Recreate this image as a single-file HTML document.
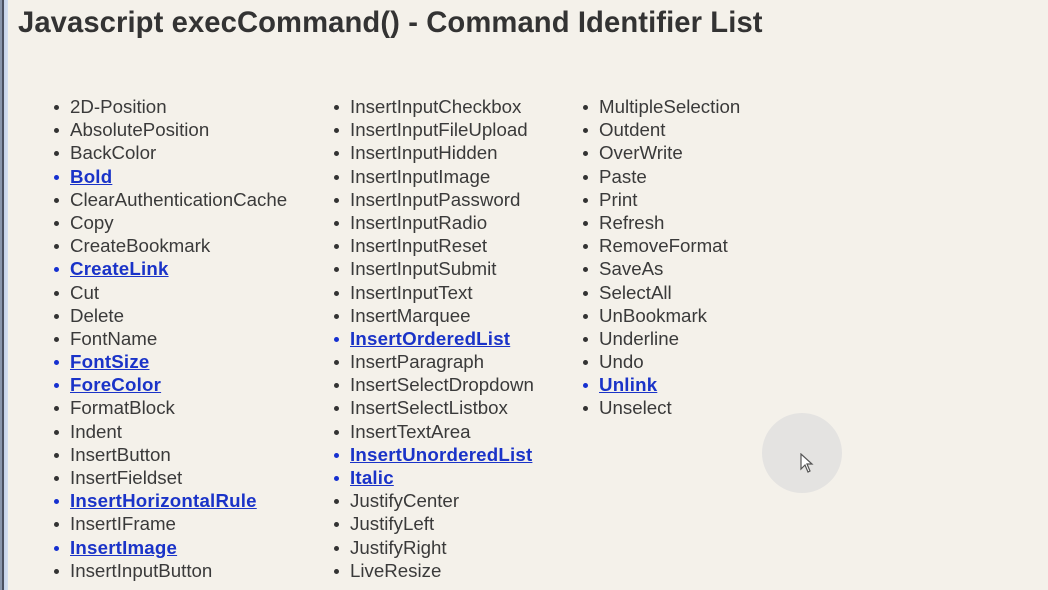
<!DOCTYPE html>
<html><head><style>
body{margin:0;width:1048px;height:590px;overflow:hidden;background:#f4f1ea;font-family:"Liberation Sans",sans-serif;position:relative}
.bar{position:absolute;left:0;top:0;width:8px;height:590px;background:linear-gradient(90deg,#8a96ac 0,#8a96ac 2px,#4a5060 2px,#4a5060 4px,#c6d3ea 4px,#d6e0f0 8px)}
h1{position:absolute;left:18px;top:7px;margin:0;font-size:29.2px;font-weight:bold;color:#333;letter-spacing:0.1px}
ul{position:absolute;top:95px;margin:0;padding:0;list-style:none}
li{height:23.2px;line-height:23.2px;font-size:18.7px;color:#3a3a3a;position:relative;padding-left:15px;white-space:nowrap}
li:before{content:"";position:absolute;left:-1px;top:10px;width:5px;height:5px;border-radius:50%;background:#333}
li.a:before{background:#1530d0}
li.a{color:#1a33c8;font-weight:bold;text-decoration:underline;letter-spacing:0.2px}
.c{position:absolute;left:762px;top:413px;width:80px;height:80px;border-radius:50%;background:#e4e3e1}
</style></head><body>
<div class="bar"></div>
<h1>Javascript execCommand() - Command Identifier List</h1>
<ul style="left:55px">
<li>2D-Position</li><li>AbsolutePosition</li><li>BackColor</li><li class="a">Bold</li><li>ClearAuthenticationCache</li><li>Copy</li><li>CreateBookmark</li><li class="a">CreateLink</li><li>Cut</li><li>Delete</li><li>FontName</li><li class="a">FontSize</li><li class="a">ForeColor</li><li>FormatBlock</li><li>Indent</li><li>InsertButton</li><li>InsertFieldset</li><li class="a">InsertHorizontalRule</li><li>InsertIFrame</li><li class="a">InsertImage</li><li>InsertInputButton</li>
</ul>
<ul style="left:335px">
<li>InsertInputCheckbox</li><li>InsertInputFileUpload</li><li>InsertInputHidden</li><li>InsertInputImage</li><li>InsertInputPassword</li><li>InsertInputRadio</li><li>InsertInputReset</li><li>InsertInputSubmit</li><li>InsertInputText</li><li>InsertMarquee</li><li class="a">InsertOrderedList</li><li>InsertParagraph</li><li>InsertSelectDropdown</li><li>InsertSelectListbox</li><li>InsertTextArea</li><li class="a">InsertUnorderedList</li><li class="a">Italic</li><li>JustifyCenter</li><li>JustifyLeft</li><li>JustifyRight</li><li>LiveResize</li>
</ul>
<ul style="left:584px">
<li>MultipleSelection</li><li>Outdent</li><li>OverWrite</li><li>Paste</li><li>Print</li><li>Refresh</li><li>RemoveFormat</li><li>SaveAs</li><li>SelectAll</li><li>UnBookmark</li><li>Underline</li><li>Undo</li><li class="a">Unlink</li><li>Unselect</li>
</ul>
<div class="c"></div>
<svg style="position:absolute;left:800px;top:453px" width="16" height="22" viewBox="0 0 16 22"><path d="M1 1 L1 16 L5 12 L8 19 L10 18 L7 11 L12 11 Z" fill="#fff" stroke="#555" stroke-width="1.2"/></svg>
</body></html>
